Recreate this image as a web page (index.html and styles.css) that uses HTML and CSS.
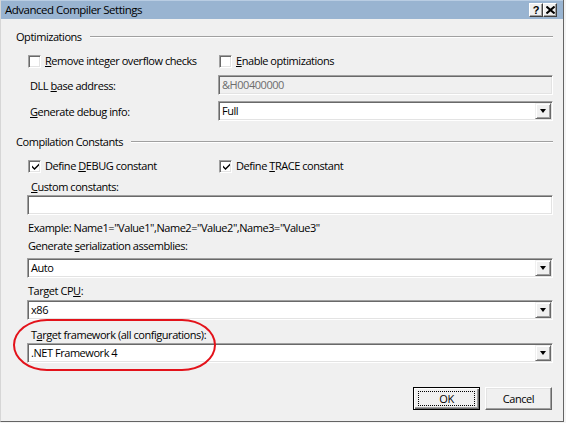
FILE: index.html
```html
<!DOCTYPE html>
<html>
<head>
<meta charset="utf-8">
<link rel="stylesheet" href="styles.css">
</head>
<body>
<div class="window">
  <div class="titlebar">
    <span class="title">Advanced Compiler Settings</span>
    <div class="tb-buttons">
      <span class="tb-btn help">?</span>
      <span class="tb-btn close"><svg width="9" height="8" viewBox="0 0 9 8"><path d="M0.5 0.5 L8.5 7.5 M8.5 0.5 L0.5 7.5" stroke="#000" stroke-width="2"/></svg></span>
    </div>
  </div>
  <div class="content">
    <div class="group-head h-opt"><span>Optimizations</span><div class="rule"></div></div>
    <div class="check-row r-chk1">
      <div class="check"><span class="box"></span><span><u>R</u>emove integer overflow checks</span></div>
      <div class="check"><span class="box"></span><span><u>E</u>nable optimizations</span></div>
    </div>
    <div class="field-row r-dll">
      <span class="flabel">DLL <u>b</u>ase address:</span>
      <div class="input disabled"><span class="val">&amp;H00400000</span></div>
    </div>
    <div class="field-row r-debug">
      <span class="flabel"><u>G</u>enerate debug info:</span>
      <div class="input combo"><span class="val">Full</span><span class="drop"><span class="arrow"></span></span></div>
    </div>
    <div class="group-head h-cc"><span>Compilation Constants</span><div class="rule"></div></div>
    <div class="check-row r-chk2">
      <div class="check"><span class="box checked"><svg width="9" height="9" viewBox="0 0 9 9"><path d="M1 3.5 L3.5 6 L8 1.5 L8 3.5 L3.5 8 L1 5.5 Z" fill="#000"/></svg></span><span>Define <u>D</u>EBUG constant</span></div>
      <div class="check"><span class="box checked"><svg width="9" height="9" viewBox="0 0 9 9"><path d="M1 3.5 L3.5 6 L8 1.5 L8 3.5 L3.5 8 L1 5.5 Z" fill="#000"/></svg></span><span>Define <u>T</u>RACE constant</span></div>
    </div>
    <div class="slabel l-custom"><u>C</u>ustom constants:</div>
    <div class="input wide i-custom"></div>
    <div class="plain l-example">Example: Name1="Value1",Name2="Value2",Name3="Value3"</div>
    <div class="plain l-ser">Generate <u>s</u>erialization assemblies:</div>
    <div class="input combo wide i-ser"><span class="val">Auto</span><span class="drop"><span class="arrow"></span></span></div>
    <div class="plain l-cpu">Target CP<u>U</u>:</div>
    <div class="input combo wide i-cpu"><span class="val">x86</span><span class="drop"><span class="arrow"></span></span></div>
    <div class="slabel l-fw">T<u>a</u>rget framework (all configurations):</div>
    <div class="input combo wide i-fw"><span class="val">.NET Framework 4</span><span class="drop"><span class="arrow"></span></span></div>
    <div class="buttons">
      <div class="btn default"><span class="focus">OK</span></div>
      <div class="btn">Cancel</div>
    </div>
  </div>
  <div class="annotation"></div>
</div>
</body>
</html>
```

FILE: styles.css
```css
* { box-sizing: border-box; }
html, body { margin: 0; padding: 0; }
body {
  background: #f4f4f4;
  font-family: "Open Sans", "Noto Sans", sans-serif;
  font-size: 11px;
  letter-spacing: -0.45px;
  color: #000;
}
u { text-decoration: underline; text-underline-offset: 1px; }

.window {
  position: relative;
  width: 564px;
  height: 422px;
  background: #f0f0f0;
  border-right: 1px solid #646464;
  border-bottom: 1px solid #646464;
  border-left: 1px solid #d6d6d6;
}

.titlebar {
  height: 19px;
  background: #99b4d1;
  border-top: 1px solid #b9cde3;
  display: flex;
  align-items: center;
  justify-content: space-between;
  padding: 0 6px 0 4px;
}
.title { font-size: 11.5px; line-height: 16px; letter-spacing: -0.5px; }
.tb-buttons { display: flex; gap: 0; }
.tb-btn {
  width: 14px;
  height: 14px;
  background: #f0f0f0;
  border: 1px solid;
  border-color: #fff #404040 #404040 #fff;
  box-shadow: inset -1px -1px #a0a0a0;
  display: flex;
  align-items: center;
  justify-content: center;
  font-weight: bold;
  font-size: 11px;
  line-height: 12px;
  letter-spacing: 0;
  font-family: "Liberation Sans", sans-serif;
}

.content {
  display: flex;
  flex-direction: column;
  padding: 0 10px 0 15px;
}

.group-head {
  display: flex;
  align-items: center;
  height: 16px;
  line-height: 16px;
}
.group-head .rule {
  flex: 1;
  margin-left: 8px;
  border-top: 1px solid #a0a0a0;
  border-bottom: 1px solid #fff;
}
.h-opt { margin-top: 10px; }
.h-cc { margin-top: 13px; }

.check-row {
  display: flex;
  height: 16px;
  line-height: 16px;
  padding-left: 12px;
}
.check { display: flex; align-items: center; gap: 4px; width: 191px; }
.r-chk1 { margin-top: 8px; }
.r-chk2 { margin-top: 8px; }

.box {
  width: 13px;
  height: 13px;
  background: #fff;
  border: 1px solid;
  border-color: #a0a0a0 #fff #fff #a0a0a0;
  box-shadow: inset 1px 1px #696969, inset -1px -1px #e3e3e3;
  display: flex;
  align-items: center;
  justify-content: center;
  flex: none;
}
.box svg { margin: 1px 0 0 1px; }

.field-row {
  display: flex;
  align-items: center;
  height: 20px;
  padding-left: 14px;
}
.field-row .flabel { width: 188px; }
.field-row .input { flex: 1; }
.r-dll { margin-top: 6px; }
.r-debug { margin-top: 6px; }

.input {
  height: 20px;
  background: #fff;
  border: 1px solid;
  border-color: #a0a0a0 #fff #fff #a0a0a0;
  box-shadow: inset 1px 1px #696969, inset -1px -1px #e3e3e3;
  display: flex;
  align-items: center;
  padding: 0 2px 0 3px;
  flex: none;
}
.input.disabled { background: #f0f0f0; color: #6d6d6d; }
.input .val { flex: 1; line-height: 16px; }
.input.wide { margin-left: 11px; }
.i-ser { margin-top: 4px; }
.i-cpu { margin-top: 1px; }

.drop {
  width: 16px;
  height: 16px;
  margin-right: -1px;
  background: #f0f0f0;
  border: 1px solid;
  border-color: #f0f0f0 #696969 #696969 #f0f0f0;
  box-shadow: inset 1px 1px #fff, inset -1px -1px #a0a0a0;
  display: flex;
  align-items: center;
  justify-content: center;
}
.arrow {
  width: 0;
  height: 0;
  border-left: 3.5px solid transparent;
  border-right: 3.5px solid transparent;
  border-top: 4px solid #000;
}

.slabel, .plain { height: 16px; line-height: 16px; flex: none; }
.slabel { padding-left: 15px; }
.plain { padding-left: 12px; }
.l-custom { margin-top: 5px; }
.l-example { margin-top: 5px; }
.l-ser { margin-top: 2px; }
.l-cpu { margin-top: 5px; }
.l-fw { margin-top: 7px; }

.buttons {
  display: flex;
  justify-content: flex-end;
  gap: 5px;
  margin-top: 24px;
  padding-right: 1px;
}
.btn {
  width: 67px;
  height: 23px;
  background: #f0f0f0;
  border: 1px solid;
  border-color: #fff #696969 #696969 #fff;
  box-shadow: inset -1px -1px #a0a0a0, inset 1px 1px #e3e3e3;
  display: flex;
  align-items: center;
  justify-content: center;
}
.btn.default {
  border: 1px solid #000;
  box-shadow: inset 1px 1px #fff, inset -1px -1px #696969, inset -2px -2px #a0a0a0;
}
.btn .focus {
  width: 57px;
  height: 15px;
  border: 1px dotted #000;
  display: flex;
  align-items: center;
  justify-content: center;
}

.annotation {
  position: absolute;
  left: 12px;
  top: 319px;
  width: 203px;
  height: 52px;
  border: 2.5px solid #e3121a;
  border-radius: 34px / 26px;
}
```
